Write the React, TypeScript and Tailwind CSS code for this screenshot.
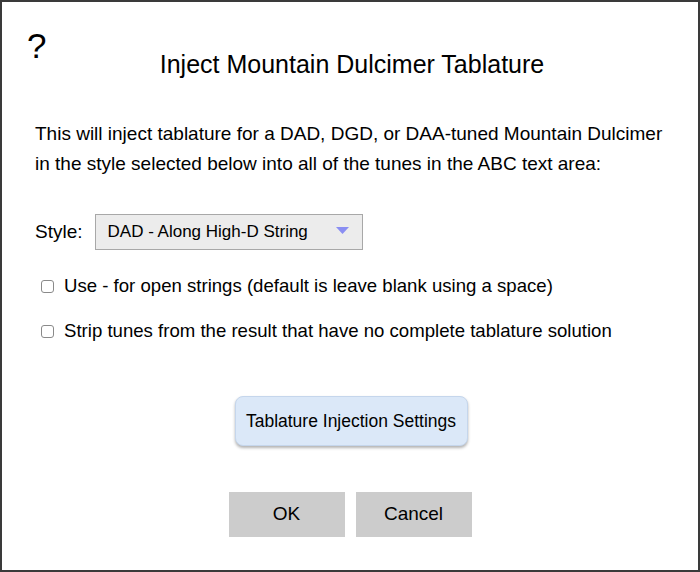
import React from 'react';

const App = () => {
  return (
    <div
      className="relative w-[700px] h-[572px] bg-white border-2 border-[#3a3a3a] text-black"
      style={{ fontFamily: '"Liberation Sans", Arial, sans-serif' }}
    >
      {/* Help */}
      <div className="absolute left-[25px] top-[26px] text-[35px] leading-none">?</div>

      {/* Title */}
      <h1 className="pt-[47px] text-center text-[25px] leading-[30px] pl-[4px]">
        Inject Mountain Dulcimer Tablature
      </h1>

      {/* Description */}
      <p className="mt-[40px] px-[33px] text-[19px] leading-[30px]">
        This will inject tablature for a DAD, DGD, or DAA-tuned Mountain Dulcimer
        <br />
        in the style selected below into all of the tunes in the ABC text area:
      </p>

      {/* Style select */}
      <div className="mt-[35px] ml-[33px] flex items-center gap-[12px]">
        <span className="text-[19px]">Style:</span>
        <div className="flex items-center justify-between w-[268px] h-[36px] bg-[#ececec] border border-[#a8a8a8] pl-[12px] pr-[13px]">
          <span className="text-[17px]">DAD - Along High-D String</span>
          <svg width="13" height="7" viewBox="0 0 13 7" className="mb-[4px]">
            <polygon points="0,0 13,0 6.5,7" fill="#8a8ef2" />
          </svg>
        </div>
      </div>

      {/* Checkboxes */}
      <div className="mt-[25px] ml-[39px] flex flex-col gap-[23px]">
        <label className="flex items-center gap-[10px] text-[18.6px] leading-[22px]">
          <span className="w-[13px] h-[13px] rounded-[3px] border border-[#8a8a8a] bg-white" />
          Use - for open strings (default is leave blank using a space)
        </label>
        <label className="flex items-center gap-[10px] text-[18.6px] leading-[22px]">
          <span className="w-[13px] h-[13px] rounded-[3px] border border-[#8a8a8a] bg-white" />
          Strip tunes from the result that have no complete tablature solution
        </label>
      </div>

      {/* Settings button */}
      <div className="mt-[54px] flex justify-center">
        <button className="w-[233px] h-[50px] rounded-[8px] bg-[#dbe8f8] border border-[#c5d6ec] shadow-[0_2px_3px_rgba(0,0,0,0.3)] text-[17.5px] ml-[2px]">
          Tablature Injection Settings
        </button>
      </div>

      {/* OK / Cancel */}
      <div className="mt-[46px] flex justify-center gap-[11px]">
        <button className="w-[116px] h-[45px] bg-[#cccccc] text-[19px]">OK</button>
        <button className="w-[116px] h-[45px] bg-[#cccccc] text-[19px]">Cancel</button>
      </div>
    </div>
  );
};

export default App;
